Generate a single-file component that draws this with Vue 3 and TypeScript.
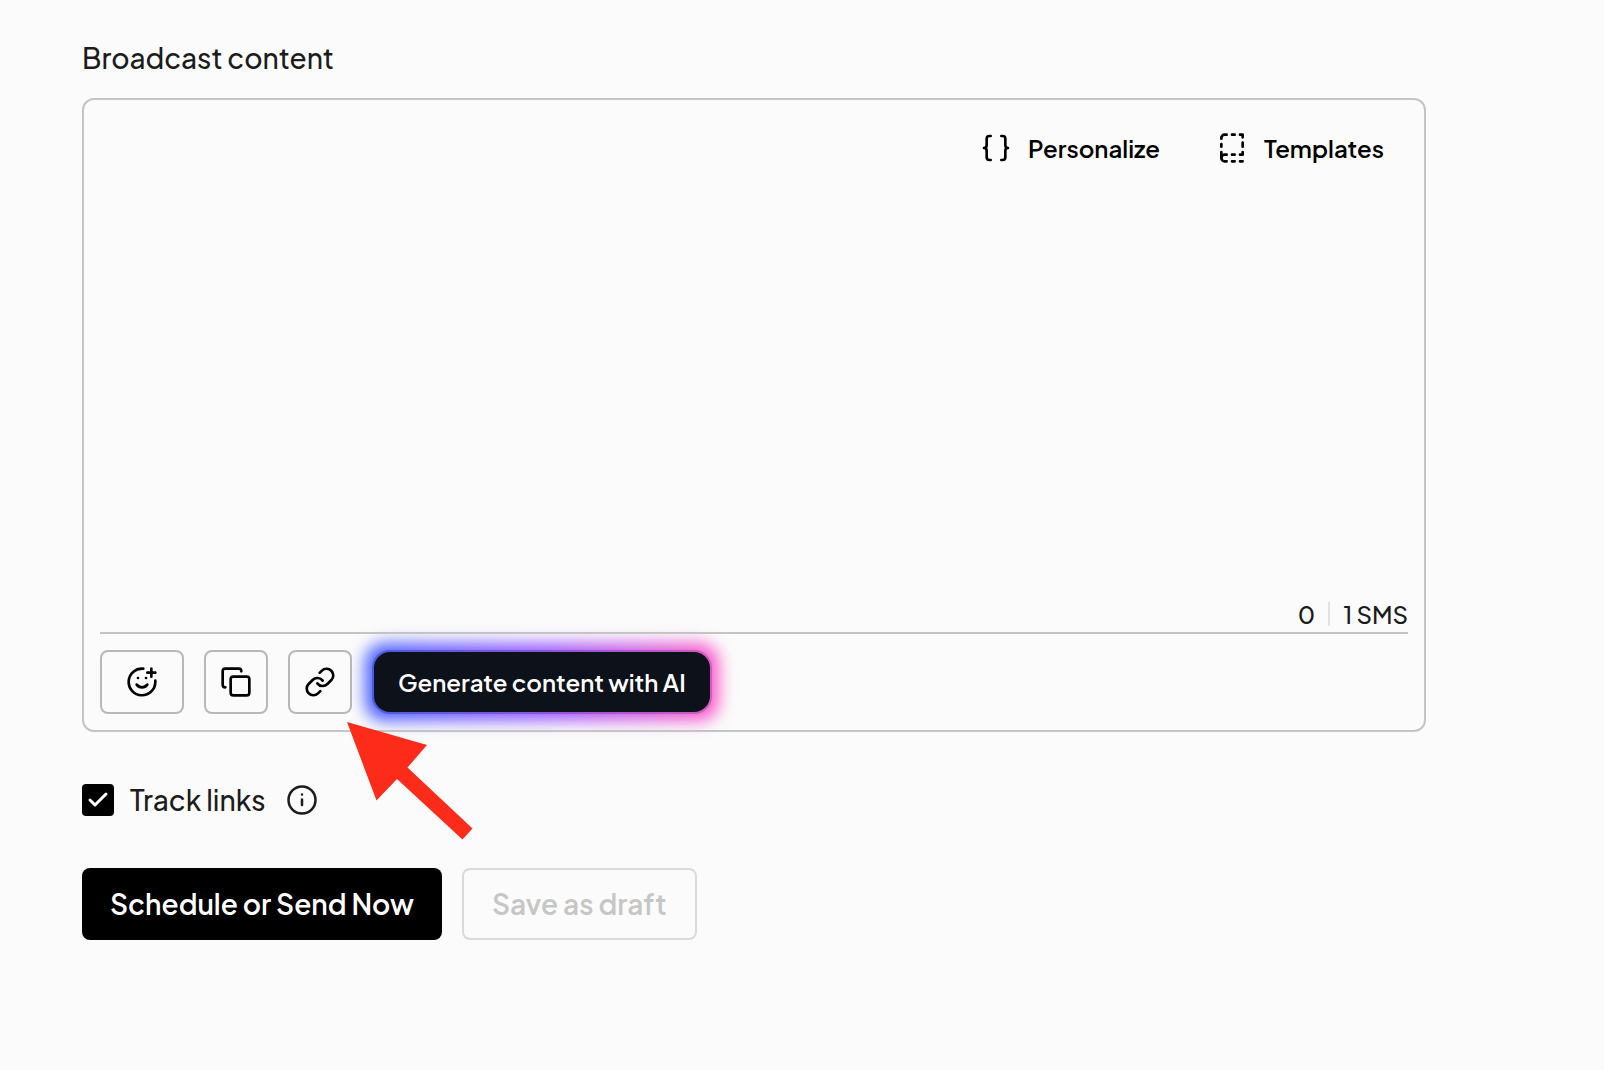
<script setup lang="ts">
import { ref } from 'vue'

const message = ref('')
const trackLinks = ref(true)
</script>

<template>
  <main class="page">
    <label class="title" for="broadcast-content">Broadcast content</label>

    <section class="editor">
      <div class="editor-top">
        <button type="button" class="ghost">
          <svg class="icon" viewBox="0 0 24 24" aria-hidden="true">
            <path d="M8 3H7a2 2 0 0 0-2 2v5a2 2 0 0 1-2 2 2 2 0 0 1 2 2v5c0 1.1.9 2 2 2h1" />
            <path d="M16 21h1a2 2 0 0 0 2-2v-5c0-1.1.9-2 2-2a2 2 0 0 1-2-2V5a2 2 0 0 0-2-2h-1" />
          </svg>
          <span>Personalize</span>
        </button>
        <button type="button" class="ghost">
          <svg class="icon" viewBox="0 0 24 24" aria-hidden="true">
            <path d="M20 22h-2M20 15v2h-2M4 19.5V15M20 8v3M18 2h2v2M4 11V9M12 2h2M12 22h2M12 17h2" />
            <path d="M8 22H6.5a2.5 2.5 0 0 1 0-5H8M4 5v-.5A2.5 2.5 0 0 1 6.5 2H8" />
          </svg>
          <span>Templates</span>
        </button>
      </div>

      <textarea id="broadcast-content" v-model="message" class="message"></textarea>

      <div class="counter">
        <span>{{ message.length }}</span>
        <span class="counter-rule"></span>
        <span>1 SMS</span>
      </div>

      <div class="toolbar">
        <button type="button" class="tool tool-wide" aria-label="Emoji">
          <svg class="icon" viewBox="0 0 24 24" aria-hidden="true">
            <path d="M22 11v1a10 10 0 1 1-9-10" />
            <path d="M8 14s1.5 2 4 2 4-2 4-2M9 9h.01M15 9h.01M16 5h6M19 2v6" />
          </svg>
        </button>
        <button type="button" class="tool" aria-label="Copy">
          <svg class="icon" viewBox="0 0 24 24" aria-hidden="true">
            <rect x="8" y="8" width="14" height="14" rx="2" />
            <path d="M4 16c-1.1 0-2-.9-2-2V4c0-1.1.9-2 2-2h10c1.1 0 2 .9 2 2" />
          </svg>
        </button>
        <div class="link-spot">
          <button type="button" class="tool" aria-label="Link">
            <svg class="icon" viewBox="0 0 24 24" aria-hidden="true">
              <path d="M10 13a5 5 0 0 0 7.54.54l3-3a5 5 0 0 0-7.07-7.07l-1.72 1.71" />
              <path d="M14 11a5 5 0 0 0-7.54-.54l-3 3a5 5 0 0 0 7.07 7.07l1.71-1.71" />
            </svg>
          </button>
          <svg class="arrow" viewBox="0 0 126 118" aria-hidden="true">
            <path d="M0 0L80 23L60.5 45.5L125.5 106.5L115.5 117.5L50 57L29.5 78.5Z" />
          </svg>
        </div>
        <button type="button" class="ai">Generate content with AI</button>
      </div>
    </section>

    <div class="track">
      <label class="track-label">
        <input v-model="trackLinks" type="checkbox" class="check-input" />
        <span class="check">
          <svg v-if="trackLinks" viewBox="0 0 32 32" aria-hidden="true">
            <path d="M8 16l5 5L24 10" />
          </svg>
        </span>
        <span>Track links</span>
      </label>
      <button type="button" class="info" aria-label="About link tracking">
        <svg class="info-icon" viewBox="0 0 32 32" aria-hidden="true">
          <circle cx="16" cy="16" r="13.5" />
          <path d="M16 15.5v5.5M16 10.5v.01" />
        </svg>
      </button>
    </div>

    <div class="actions">
      <button type="button" class="action primary">Schedule or Send Now</button>
      <button type="button" class="action draft" disabled>Save as draft</button>
    </div>
  </main>
</template>

<style>
body {
  background: #fbfbfb;
}
</style>

<style scoped>
.page {
  box-sizing: border-box;
  padding: 40px 178px 40px 82px;
  color: #1c1c1c;
  font-family: "Plus Jakarta Sans", Inter, "Liberation Sans", sans-serif;
  font-size: 28px;
  font-weight: 500;
  line-height: 36px;
}

button {
  margin: 0;
  font-family: inherit;
  cursor: pointer;
}

.title {
  display: block;
  margin-bottom: 22px;
}

.editor {
  display: flex;
  flex-direction: column;
  padding: 16px;
  border: 2px solid #c4c4c4;
  border-radius: 12px;
}

.editor-top {
  display: flex;
  justify-content: flex-end;
  gap: 8px;
}

.ghost {
  display: flex;
  align-items: center;
  gap: 16px;
  height: 64px;
  padding: 0 24px;
  border: 0;
  background: none;
  color: #000;
  font-size: 24px;
  font-weight: 600;
  line-height: 32px;
}

.icon {
  display: block;
  flex: none;
  width: 32px;
  height: 32px;
  fill: none;
  stroke: #000;
  stroke-width: 2;
  stroke-linecap: round;
  stroke-linejoin: round;
}

.message {
  height: 384px;
  box-sizing: border-box;
  padding: 16px 0;
  border: 0;
  outline: 0;
  resize: none;
  background: none;
  color: inherit;
  font: inherit;
}

.counter {
  display: flex;
  align-items: center;
  justify-content: flex-end;
  gap: 13px;
  height: 36px;
  margin-top: 32px;
  border-bottom: 2px solid #c4c4c4;
  font-size: 24px;
}

.counter-rule {
  width: 2px;
  height: 24px;
  background: #e2e2e2;
}

.toolbar {
  display: flex;
  gap: 20px;
  margin-top: 16px;
}

.tool {
  display: flex;
  align-items: center;
  justify-content: center;
  width: 64px;
  height: 64px;
  padding: 0;
  border: 2px solid #b8b8b8;
  border-radius: 8px;
  background: #fbfbfb;
}

.tool-wide {
  width: 84px;
}

.link-spot {
  position: relative;
  z-index: 1;
}

.arrow {
  position: absolute;
  top: 72px;
  left: 59px;
  width: 126px;
  height: 118px;
  fill: #fd2c1a;
  pointer-events: none;
}

.ai {
  position: relative;
  height: 64px;
  padding: 0 24px;
  border: 2px solid transparent;
  border-radius: 18px;
  background:
    linear-gradient(#0d1119, #0d1119) padding-box,
    linear-gradient(90deg, #4a5cdd, #8a54dc 50%, #d05cbc) border-box;
  color: #fff;
  font-size: 24px;
  font-weight: 600;
  line-height: 32px;
  white-space: nowrap;
}

.ai::before {
  content: "";
  position: absolute;
  z-index: -1;
  inset: -9px;
  border-radius: 20px;
  background: linear-gradient(90deg, #4a62ff, #9a5cff 50%, #ff5cc8);
  filter: blur(8px);
}

.track {
  display: flex;
  align-items: center;
  gap: 20px;
  margin-top: 50px;
}

.track-label {
  display: flex;
  align-items: center;
  gap: 16px;
  cursor: pointer;
}

.check-input {
  position: absolute;
  width: 32px;
  height: 32px;
  margin: 0;
  opacity: 0;
}

.check {
  width: 32px;
  height: 32px;
  border-radius: 4px;
  background: #000;
}

.check svg {
  display: block;
  fill: none;
  stroke: #fff;
  stroke-width: 3;
  stroke-linecap: round;
  stroke-linejoin: round;
}

.info {
  padding: 0;
  border: 0;
  background: none;
}

.info-icon {
  display: block;
  width: 32px;
  height: 32px;
  fill: none;
  stroke: #1c1c1c;
  stroke-width: 2.5;
  stroke-linecap: round;
}

.actions {
  display: flex;
  gap: 20px;
  margin-top: 50px;
}

.action {
  height: 72px;
  padding: 0 28px;
  border: 0;
  border-radius: 8px;
  font-size: 28px;
  font-weight: 600;
  line-height: 36px;
}

.primary {
  background: #000;
  color: #fff;
}

.draft {
  border: 2px solid #dadada;
  background: #fbfbfb;
  color: #c6c6c6;
  cursor: default;
}
</style>
